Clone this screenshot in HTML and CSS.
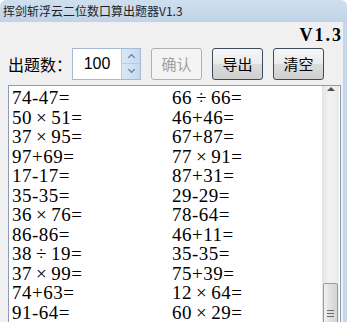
FILE: index.html
```html
<!DOCTYPE html>
<html lang="zh-CN">
<head>
  <meta charset="UTF-8">
  <title>挥剑斩浮云二位数口算出题器V1.3</title>
  <link rel="stylesheet" href="styles.css">
</head>
<body>
  <div class="window">
    <div class="titlebar">挥剑斩浮云二位数口算出题器V1.3</div>
    <div class="client">
      <div class="version">V1.3</div>
      <div class="toolbar">
        <span class="label">出题数：</span>
        <div class="spinbox">
          <span class="spin-value">100</span>
          <div class="spin-buttons">
            <span class="spin-up"></span>
            <span class="spin-down"></span>
          </div>
        </div>
        <button class="btn" disabled>确认</button>
        <button class="btn">导出</button>
        <button class="btn">清空</button>
      </div>
      <div class="output">
        <div class="problems">
          <span>74-47=</span><span>66<i class="op">÷</i>66=</span>
          <span>50<i class="op">×</i>51=</span><span>46+46=</span>
          <span>37<i class="op">×</i>95=</span><span>67+87=</span>
          <span>97+69=</span><span>77<i class="op">×</i>91=</span>
          <span>17-17=</span><span>87+31=</span>
          <span>35-35=</span><span>29-29=</span>
          <span>36<i class="op">×</i>76=</span><span>78-64=</span>
          <span>86-86=</span><span>46+11=</span>
          <span>38<i class="op">÷</i>19=</span><span>35-35=</span>
          <span>37<i class="op">×</i>99=</span><span>75+39=</span>
          <span>74+63=</span><span>12<i class="op">×</i>64=</span>
          <span>91-64=</span><span>60<i class="op">×</i>29=</span>
        </div>
        <div class="scrollbar">
          <div class="scroll-arrow"></div>
          <div class="scroll-thumb"><span class="grip"></span></div>
        </div>
      </div>
    </div>
  </div>
</body>
</html>
```

FILE: styles.css
```css
body {
  margin: 0;
  width: 349px;
  height: 322px;
  overflow: hidden;
  background: #fff;
  font-family: "Noto Sans CJK SC", sans-serif;
}
.window {
  width: 347px;
  height: 322px;
  display: flex;
  flex-direction: column;
  border-radius: 6px 6px 0 0;
  overflow: hidden;
}
.titlebar {
  height: 22px;
  line-height: 21px;
  padding-left: 3px;
  font-size: 12px;
  color: #1e1e1e;
  background: linear-gradient(#cfdfef, #bfd3e9);
  white-space: nowrap;
}
.client {
  flex: 1;
  background: #f0f0f0;
  border-right: 4px solid #c3d7ec;
  padding-left: 8px;
  overflow: hidden;
}
.version {
  height: 25px;
  text-align: right;
  font-family: "Liberation Serif", serif;
  font-weight: bold;
  font-size: 18px;
  line-height: 22px;
  letter-spacing: 2px;
  padding-top: 2px;
  box-sizing: border-box;
  color: #000;
}
.toolbar {
  display: flex;
  align-items: center;
  height: 33px;
}
.label {
  flex-shrink: 0;
  width: 64px;
  font-size: 16px;
  white-space: nowrap;
  color: #000;
}
.spinbox {
  display: flex;
  flex-shrink: 0;
  height: 32px;
  border: 1px solid #a4b9d6;
  background: #fff;
  margin-right: 10px;
  box-sizing: border-box;
}
.spin-value {
  width: 48px;
  line-height: 30px;
  text-align: center;
  font-family: "Liberation Sans", sans-serif;
  font-size: 16px;
  color: #000;
}
.spin-buttons {
  width: 18px;
  display: flex;
  flex-direction: column;
  background: linear-gradient(90deg, #dce8f6, #c5d8ef);
  border-left: 1px solid #b7cbe4;
}
.spin-up, .spin-down {
  flex: 1;
  display: flex;
  align-items: center;
  justify-content: center;
}
.spin-up {
  border-bottom: 1px solid #b7cbe4;
}
.spin-up::after, .spin-down::after {
  content: "";
  width: 4px;
  height: 4px;
  border-left: 1px solid #4d6f99;
  border-top: 1px solid #4d6f99;
}
.spin-up::after {
  transform: rotate(45deg);
  margin-top: 3px;
}
.spin-down::after {
  transform: rotate(225deg);
  margin-bottom: 3px;
}
.btn {
  flex-shrink: 0;
  width: 51px;
  height: 32px;
  margin-right: 10px;
  padding: 0;
  font-family: "Noto Sans CJK SC", sans-serif;
  font-size: 15px;
  color: #000;
  border: 1px solid #3b4a5c;
  border-radius: 3px;
  background: linear-gradient(#f6f6f6 0%, #ebebeb 50%, #dddddd 51%, #cfcfcf 100%);
}
.btn:disabled {
  color: #a0a0a0;
  border-color: #adb2b5;
  background: #f4f4f4;
}
.output {
  display: flex;
  margin-top: 5px;
  width: 333px;
  height: 240px;
  border: 1px solid #8e9cb3;
  background: #fff;
  box-sizing: border-box;
}
.problems {
  flex: 1;
  display: grid;
  grid-template-columns: 160px 1fr;
  grid-auto-rows: 19.5px;
  padding: 2px 0 0 3px;
  font-family: "Liberation Serif", serif;
  font-size: 19px;
  letter-spacing: 0.5px;
  line-height: 19.5px;
  color: #000;
  white-space: nowrap;
  overflow: hidden;
}
.op {
  padding: 0 4px;
  font-style: normal;
  font-size: 19px;
}
.scrollbar {
  width: 17px;
  margin-right: 1px;
  background: linear-gradient(90deg, #e3e3e3, #f2f2f2 40%, #ececec);
  display: flex;
  flex-direction: column;
  align-items: center;
}
.scroll-arrow {
  height: 17px;
  width: 17px;
  display: flex;
  align-items: center;
  justify-content: center;
}
.scroll-arrow::after {
  content: "";
  border-left: 4px solid transparent;
  border-right: 4px solid transparent;
  border-bottom: 4px solid #505050;
}
.scroll-thumb {
  margin-top: 190px;
  width: 15px;
  height: 60px;
  border: 1px solid #9a9a9a;
  border-radius: 2px;
  box-sizing: border-box;
  background: linear-gradient(90deg, #f1f1f1, #e0e0e0 50%, #d4d4d4);
  display: flex;
  justify-content: center;
  padding-top: 26px;
}
.grip {
  width: 7px;
  height: 5px;
  border-top: 1px solid #6a6a6a;
  border-bottom: 1px solid #6a6a6a;
  background: linear-gradient(transparent 2px, #6a6a6a 2px, #6a6a6a 3px, transparent 3px);
}
```
